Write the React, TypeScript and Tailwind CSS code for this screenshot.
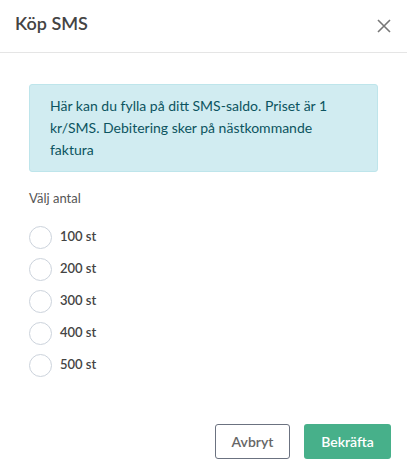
import { useState } from 'react'

const options = [100, 200, 300, 400, 500]

export default function App() {
  const [selected, setSelected] = useState<number | null>(null)

  return (
    <div
      className="w-[407px] h-[476px] bg-white flex flex-col text-[#4a4a4a]"
      style={{ fontFamily: 'Lato, "Open Sans", "Liberation Sans", sans-serif' }}
    >
      <div className="flex items-center justify-between h-[53px] px-[15px] border-b border-[#e5e5e5]">
        <h1 className="text-[18px] font-semibold text-[#444] -mt-[6px]">Köp SMS</h1>
        <button className="text-[#777] mr-[1px]" aria-label="Stäng">
          <svg width="14" height="14" viewBox="0 0 14 14" fill="none" stroke="currentColor" strokeWidth="1.6">
            <path d="M1 1L13 13M13 1L1 13" />
          </svg>
        </button>
      </div>

      <div className="flex-1 px-[29px] pt-[31px]">
        <div className="bg-[#d1ecf1] border border-[#bee5eb] rounded-[3px] px-[20px] py-[10px] text-[14px] leading-[22px] text-[#0c5460]">
          Här kan du fylla på ditt SMS-saldo. Priset är 1 kr/SMS. Debitering sker på nästkommande faktura
        </div>

        <p className="mt-[17px] text-[13px] text-[#555]">Välj antal</p>

        <div className="mt-[17px] flex flex-col gap-[9px]">
          {options.map(n => (
            <label key={n} className="flex items-center gap-[8px] cursor-pointer">
              <span
                onClick={() => setSelected(n)}
                className="w-[23px] h-[23px] rounded-full border border-[#ccd3dc] bg-white flex items-center justify-center"
              >
                {selected === n && <span className="w-[11px] h-[11px] rounded-full bg-[#47b08a]" />}
              </span>
              <span className="text-[13px] font-semibold text-[#444]">{n} st</span>
            </label>
          ))}
        </div>
      </div>

      <div className="flex justify-end gap-[14px] px-[16px] pb-[17px]">
        <button className="h-[35px] w-[75px] rounded-[3px] border border-[#6b7280] text-[14px] font-semibold text-[#666]">
          Avbryt
        </button>
        <button className="h-[35px] w-[87px] rounded-[3px] bg-[#47b08a] text-[14px] font-semibold text-white">
          Bekräfta
        </button>
      </div>
    </div>
  )
}
